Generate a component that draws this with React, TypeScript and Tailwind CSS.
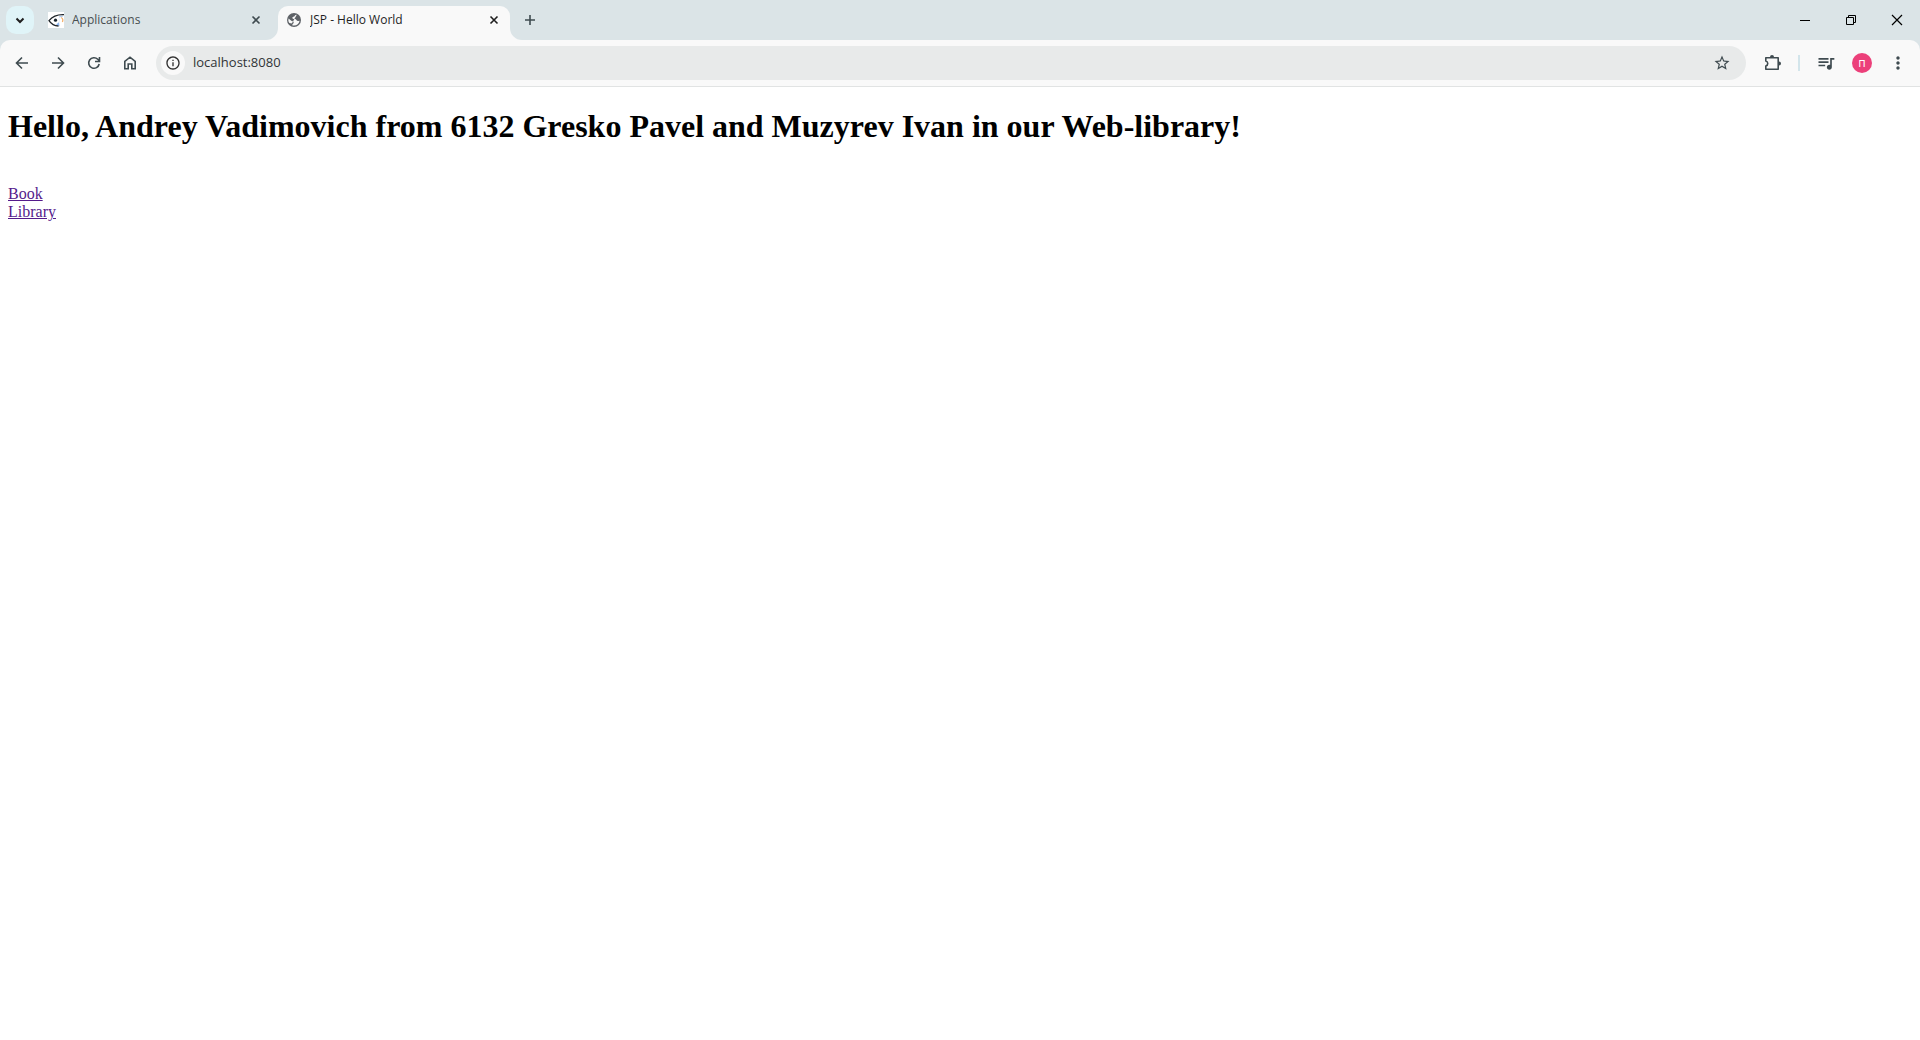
import type { ReactNode } from 'react'
import { MdOutlineInfo, MdStarOutline, MdQueueMusic, MdMoreVert } from 'react-icons/md'

function Stroke({ d, size = 16, width = 2 }: { d: string; size?: number; width?: number }) {
  return (
    <svg width={size} height={size} viewBox="0 0 16 16" fill="none" stroke="currentColor" strokeWidth={width} aria-hidden="true">
      <path d={d} />
    </svg>
  )
}

function FishIcon() {
  return (
    <svg width="16" height="16" viewBox="0 0 16 16" className="shrink-0" aria-hidden="true">
      <path d="M0 0h16v16H0z" fill="#fff" />
      <path d="M11 6.500c.6 1.500.6 2.800 0 4" fill="none" stroke="#e6eef8" />
      <path d="M13 5.500c2 .8 2.200 2.800 1.400 4.500" fill="none" stroke="#f3b06c" strokeWidth="1.300" />
      <path d="M8 12.500l3-2.200.5 4z" fill="#8fb8f2" />
      <path d="M11 5l4-1" stroke="#a9c8f0" />
      <path d="M16 2.600C9.500 2.300 4.500 4.300 1 8.700c2.300 3.500 5.500 5.300 9.500 5.300" fill="none" stroke="#20262b" strokeWidth="1.300" />
      <circle cx="7.500" cy="8.200" r="1.600" fill="#17232c" />
    </svg>
  )
}

function GlobeIcon() {
  return (
    <svg width="16" height="16" viewBox="0 0 16 16" className="shrink-0" aria-hidden="true">
      <circle cx="8" cy="8" r="7" fill="#5f6368" />
      <path d="M9 2.600C7 2.400 7.500 4.500 6 5.200c-1.600.7-1 2.300.6 2.300h2.200c1.500 0 .8 2.300 2.200 1.800l2.600-1.500a5.600 5.600 0 0 0-1.800-4l-1.200 1.200c-1 .4-1.900-.6-1.600-2.400z" fill="#5f6368" />
      <path d="M10.800 2.700C8.500 2.600 9 4.500 7.300 4.800 5.900 5.100 6 6.800 7.500 7h1.700c1.500.2 1.400 2.300 3 2.100l1.400-.4c-.5 2.900-2.700 4.900-5.600 4.900-.8 0-1.300-.1-1.800-.3.300-1.800 1.400-1.700 1.500-2.900.1-1.500-2-.8-3-2.100L2.500 6.600A5.600 5.600 0 0 0 3 10.600l.4.5c1.200.2 1.600-.2 2.400.5" fill="#f9f9f9" />
    </svg>
  )
}

function IconButton({ label, children }: { label: string; children: ReactNode }) {
  return (
    <button type="button" aria-label={label} className="flex size-[34px] shrink-0 items-center justify-center rounded-full text-[#3f4b50]">
      {children}
    </button>
  )
}

function Tab({ title, icon, active = false }: { title: string; icon: ReactNode; active?: boolean }) {
  return (
    <div className={active ? 'relative flex h-[34px] w-[232px] items-center rounded-t-[10px] bg-[#f9f9f9] pr-2 pb-1.5 pl-2' : 'flex h-[34px] w-[230px] items-center pr-3.5 pb-1.5'}>
      {active && (
        <>
          <svg width="12" height="12" className="absolute bottom-0 -left-3 fill-[#f9f9f9]" aria-hidden="true"><path d="M12 0v12H0A12 12 0 0 0 12 0z" /></svg>
          <svg width="12" height="12" className="absolute -right-3 bottom-0 fill-[#f9f9f9]" aria-hidden="true"><path d="M0 0v12h12A12 12 0 0 1 0 0z" /></svg>
        </>
      )}
      {icon}
      <span className={active ? 'ml-2 flex-1 truncate text-xs text-[#1f1f1f]' : 'ml-2 flex-1 truncate text-xs text-[#474d50]'}>{title}</span>
      <button type="button" aria-label={'Close ' + title} className={active ? 'flex size-4 items-center justify-center text-[#1f1f1f]' : 'flex size-4 items-center justify-center text-[#3f4b50]'}>
        <Stroke d="M4.500 4.500l7 7M11.500 4.500l-7 7" width={1.6} />
      </button>
    </div>
  )
}

export default function App() {
  return (
    <div className="min-h-screen bg-white">
      <header className="bg-[#dbe4e7] font-['Open_Sans',sans-serif]">
        <div className="flex h-10 items-end pl-1.5">
          <button type="button" aria-label="Search tabs" className="mb-1.5 flex size-7 items-center justify-center rounded-[10px] bg-[#e0f4f8] text-[#1f1f1f]">
            <Stroke d="M4.500 6.500L8 10l3.500-3.500" />
          </button>
          <div className="ml-3.5 flex">
            <Tab title="Applications" icon={<FishIcon />} />
            <Tab title="JSP - Hello World" icon={<GlobeIcon />} active />
          </div>
          <button type="button" aria-label="New tab" className="mb-1.5 ml-1.5 flex size-7 items-center justify-center text-[#3f4b50]">
            <Stroke d="M8 3v10M3 8h10" width={1.6} />
          </button>
          <div className="ml-auto flex h-10 text-black">
            <button type="button" aria-label="Minimize" className="flex w-[46px] items-center justify-center"><Stroke d="M3 8.500h10" width={1} /></button>
            <button type="button" aria-label="Restore" className="flex w-[46px] items-center justify-center"><Stroke d="M3.500 5.500h7v7h-7zM5.500 5.500v-2h7v7h-2" width={1} /></button>
            <button type="button" aria-label="Close window" className="flex w-[46px] items-center justify-center"><Stroke d="M3 3l10 10M13 3L3 13" width={1.2} /></button>
          </div>
        </div>
        <nav aria-label="Browser toolbar" className="flex items-center rounded-t-[10px] border-b border-[#e1e3e3] bg-[#f9f9f9] px-[5px] py-1.5">
          <div className="flex gap-0.5">
            <IconButton label="Back"><Stroke d="M14 8H3M8 2.500L2.500 8 8 13.500" width={1.6} /></IconButton>
            <IconButton label="Forward"><Stroke d="M2 8h11M8 2.500L13.500 8 8 13.500" width={1.6} /></IconButton>
            <IconButton label="Reload"><Stroke d="M13.200 9A5.300 5.300 0 1 1 11.800 4.300L13.500 6M13.500 2v4.500H9" width={1.6} /></IconButton>
            <IconButton label="Home"><Stroke d="M2.800 13.700V6.300L8 2.200l5.200 4.100v7.400H9.800V9H6.200v4.700z" width={1.6} /></IconButton>
          </div>
          <div className="ml-[9px] flex h-[34px] flex-1 items-center rounded-full bg-[#e8eaea] pr-[15px] pl-[5px]">
            <button type="button" aria-label="Site information" className="flex size-6 shrink-0 items-center justify-center rounded-full bg-[#f9f9f9] text-[#303030]">
              <MdOutlineInfo className="size-4" />
            </button>
            <input aria-label="Address" defaultValue="localhost:8080" className="ml-2 min-w-0 flex-1 bg-transparent text-[13px] text-[#303436] outline-none" />
            <button type="button" aria-label="Bookmark this tab" className="text-[#3f4b50]"><MdStarOutline className="size-[18px]" /></button>
          </div>
          <div className="ml-2.5 flex items-center">
            <IconButton label="Extensions">
              <svg width="18" height="18" viewBox="0 0 18 18" aria-hidden="true">
                <path d="M1.800 3.800h12.400v11.400H1.800v-3.200c2.600-.7 2.600-4.300 0-5z" fill="none" stroke="currentColor" strokeWidth="1.600" strokeLinejoin="round" />
                <path d="M6 3a2 2 0 0 1 4 0zM15 7.500a2 2 0 0 1 0 4z" fill="currentColor" />
              </svg>
            </IconButton>
            <span className="mr-[9px] ml-2 h-4 w-0.5 bg-[#d3e5eb]" />
            <div className="flex gap-0.5">
              <IconButton label="Media controls"><MdQueueMusic className="size-5" /></IconButton>
              <IconButton label="Profile">
                <span className="flex size-5 items-center justify-center rounded-full bg-[#ec407a] text-xs leading-none text-white">п</span>
              </IconButton>
              <IconButton label="Browser menu"><MdMoreVert className="size-5" /></IconButton>
            </div>
          </div>
        </nav>
      </header>
      <main className="px-2 font-['Liberation_Serif',serif] text-base leading-[18px] text-black">
        <h1 className="pt-[21px] text-[32px] leading-[37px] font-bold">
          Hello, Andrey Vadimovich from 6132 Gresko Pavel and Muzyrev Ivan in our Web-library!
        </h1>
        <div className="mt-10 flex flex-col items-start">
          <a href="#book" className="text-[#551a8b] underline">Book</a>
          <a href="#library" className="text-[#551a8b] underline">Library</a>
        </div>
      </main>
    </div>
  )
}
